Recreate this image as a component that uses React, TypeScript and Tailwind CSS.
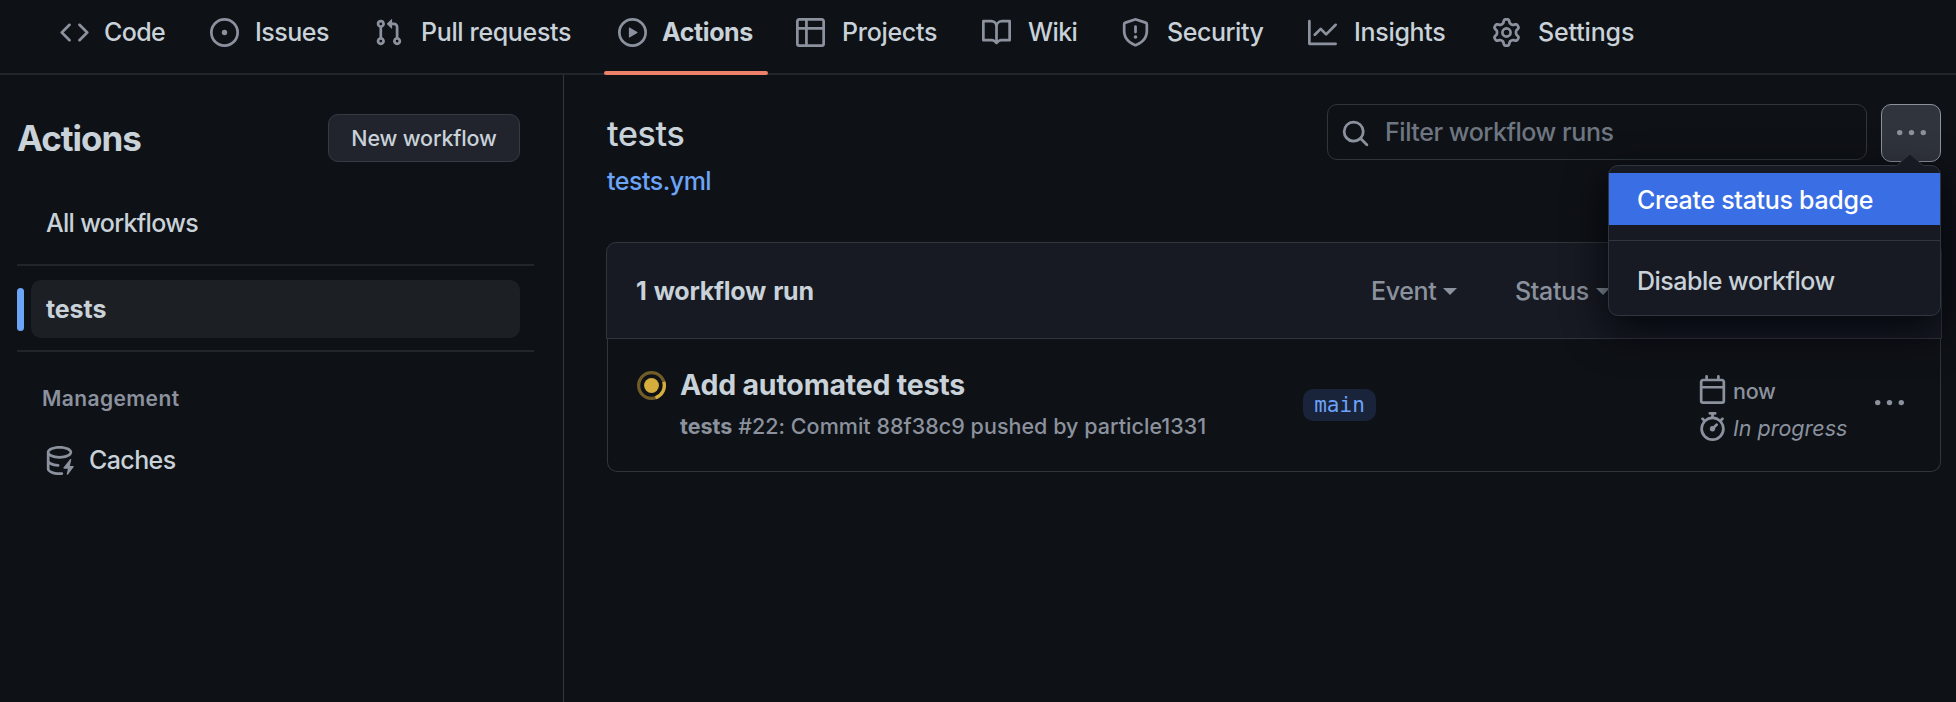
import React from "react";

const icons = {
  code: "m11.28 3.22 4.25 4.25a.75.75 0 0 1 0 1.06l-4.25 4.25a.749.749 0 0 1-1.275-.326.749.749 0 0 1 .215-.734L13.94 8l-3.72-3.72a.749.749 0 0 1 .326-1.275.749.749 0 0 1 .734.215Zm-6.56 0a.751.751 0 0 1 1.042.018.751.751 0 0 1 .018 1.042L2.06 8l3.72 3.72a.749.749 0 0 1-.326 1.275.749.749 0 0 1-.734-.215L.47 8.53a.75.75 0 0 1 0-1.06Z",
  issue: "M8 9.5a1.5 1.5 0 1 0 0-3 1.5 1.5 0 0 0 0 3ZM8 0a8 8 0 1 1 0 16A8 8 0 0 1 8 0ZM1.5 8a6.5 6.5 0 1 0 13 0 6.5 6.5 0 0 0-13 0Z",
  pull: "M1.5 3.25a2.25 2.25 0 1 1 3 2.122v5.256a2.251 2.251 0 1 1-1.5 0V5.372A2.25 2.25 0 0 1 1.5 3.25Zm5.677-.177L9.573.677A.25.25 0 0 1 10 .854V2.5h1A2.5 2.5 0 0 1 13.5 5v5.628a2.251 2.251 0 1 1-1.5 0V5a1 1 0 0 0-1-1h-1v1.646a.25.25 0 0 1-.427.177L7.177 3.427a.25.25 0 0 1 0-.354ZM3.75 2.5a.75.75 0 1 0 0 1.5.75.75 0 0 0 0-1.5Zm0 9.5a.75.75 0 1 0 0 1.5.75.75 0 0 0 0-1.5Zm8.25.75a.75.75 0 1 0 1.5 0 .75.75 0 0 0-1.5 0Z",
  play: "M8 0a8 8 0 1 1 0 16A8 8 0 0 1 8 0ZM1.5 8a6.5 6.5 0 1 0 13 0 6.5 6.5 0 0 0-13 0Zm4.879-2.773 4.264 2.559a.25.25 0 0 1 0 .428l-4.264 2.559A.25.25 0 0 1 6 10.559V5.442a.25.25 0 0 1 .379-.215Z",
  table: "M0 1.75C0 .784.784 0 1.75 0h12.5C15.216 0 16 .784 16 1.75v12.5A1.75 1.75 0 0 1 14.25 16H1.75A1.75 1.75 0 0 1 0 14.25ZM6.5 6.5v8h7.75a.25.25 0 0 0 .25-.25V6.5Zm8-1.5V1.75a.25.25 0 0 0-.25-.25H6.5V5Zm-13 1.5v7.75c0 .138.112.25.25.25H5v-8ZM5 5V1.5H1.75a.25.25 0 0 0-.25.25V5Z",
  book: "M0 1.75A.75.75 0 0 1 .75 1h4.253c1.227 0 2.317.59 3 1.501A3.743 3.743 0 0 1 11.006 1h4.245a.75.75 0 0 1 .75.75v10.5a.75.75 0 0 1-.75.75h-4.507a2.25 2.25 0 0 0-1.591.659l-.622.621a.75.75 0 0 1-1.06 0l-.622-.621A2.25 2.25 0 0 0 5.258 13H.75a.75.75 0 0 1-.75-.75Zm7.251 10.324.004-5.073-.002-2.253A2.25 2.25 0 0 0 5.003 2.5H1.5v9h3.757a3.75 3.75 0 0 1 1.994.574ZM8.755 4.75l-.004 7.322a3.752 3.752 0 0 1 1.992-.572H14.5v-9h-3.495a2.25 2.25 0 0 0-2.25 2.25Z",
  shield: "M7.467.133a1.748 1.748 0 0 1 1.066 0l5.25 1.68A1.75 1.75 0 0 1 15 3.48V7c0 1.566-.32 3.182-1.303 4.682-.983 1.498-2.585 2.813-5.032 3.855a1.697 1.697 0 0 1-1.33 0c-2.447-1.042-4.049-2.357-5.032-3.855C1.32 10.182 1 8.566 1 7V3.48a1.75 1.75 0 0 1 1.217-1.667Zm.61 1.429a.25.25 0 0 0-.153 0l-5.25 1.68a.25.25 0 0 0-.174.238V7c0 1.358.275 2.666 1.057 3.86.784 1.194 2.121 2.34 4.366 3.297a.196.196 0 0 0 .154 0c2.245-.956 3.582-2.104 4.366-3.298C13.225 9.666 13.5 8.36 13.5 7V3.48a.251.251 0 0 0-.174-.237l-5.25-1.68ZM8.75 4.75v3a.75.75 0 0 1-1.5 0v-3a.75.75 0 0 1 1.5 0ZM9 10.5a1 1 0 1 1-2 0 1 1 0 0 1 2 0Z",
  graph: "M1.5 1.75V13.5h13.75a.75.75 0 0 1 0 1.5H.75a.75.75 0 0 1-.75-.75V1.75a.75.75 0 0 1 1.5 0Zm14.28 2.53-5.25 5.25a.75.75 0 0 1-1.06 0L7 7.06 4.28 9.78a.751.751 0 0 1-1.042-.018.751.751 0 0 1-.018-1.042l3.25-3.25a.75.75 0 0 1 1.06 0L10 7.94l4.72-4.72a.751.751 0 0 1 1.042.018.751.751 0 0 1 .018 1.042Z",
  gear: "M8 0a8.2 8.2 0 0 1 .701.031C9.444.095 9.99.645 10.16 1.29l.288 1.107c.018.066.079.158.212.224.231.114.454.243.668.386.123.082.233.09.299.071l1.103-.303c.644-.176 1.392.021 1.82.63.27.385.506.792.704 1.218.315.675.111 1.422-.364 1.891l-.814.806c-.049.048-.098.147-.088.294.016.257.016.515 0 .772-.01.147.038.246.088.294l.814.806c.475.469.679 1.216.364 1.891a7.977 7.977 0 0 1-.704 1.217c-.428.61-1.176.807-1.82.63l-1.102-.302c-.067-.019-.177-.011-.3.071a5.909 5.909 0 0 1-.668.386c-.133.066-.194.158-.211.224l-.29 1.106c-.168.646-.715 1.196-1.458 1.26a8.006 8.006 0 0 1-1.402 0c-.743-.064-1.289-.614-1.458-1.26l-.289-1.106c-.018-.066-.079-.158-.212-.224a5.738 5.738 0 0 1-.668-.386c-.123-.082-.233-.09-.299-.071l-1.103.303c-.644.176-1.392-.021-1.82-.63a8.12 8.12 0 0 1-.704-1.218c-.315-.675-.111-1.422.363-1.891l.815-.806c.05-.048.098-.147.088-.294a6.214 6.214 0 0 1 0-.772c.01-.147-.038-.246-.088-.294l-.815-.806C.635 6.045.431 5.298.746 4.623a7.92 7.92 0 0 1 .704-1.217c.428-.61 1.176-.807 1.82-.63l1.102.302c.067.019.177.011.3-.071.214-.143.437-.272.668-.386.133-.066.194-.158.211-.224l.29-1.106C6.009.645 6.556.095 7.299.03 7.53.01 7.764 0 8 0Zm-.571 1.525c-.036.003-.108.036-.137.146l-.289 1.105c-.147.561-.549.967-.998 1.189-.173.086-.34.183-.5.29-.417.278-.97.423-1.529.27l-1.103-.303c-.109-.03-.175.016-.195.045-.22.312-.412.644-.573.99-.014.031-.021.11.059.19l.815.806c.411.406.562.957.53 1.456a4.709 4.709 0 0 0 0 .582c.032.499-.119 1.05-.53 1.456l-.815.806c-.081.08-.073.159-.059.19.162.346.353.677.573.989.02.03.085.076.195.046l1.102-.303c.56-.153 1.113-.008 1.53.27.161.107.328.204.501.29.447.222.85.629.997 1.189l.289 1.105c.029.109.101.143.137.146a6.6 6.6 0 0 0 1.142 0c.036-.003.108-.036.137-.146l.289-1.105c.147-.561.549-.967.998-1.189.173-.086.34-.183.5-.29.417-.278.97-.423 1.529-.27l1.103.303c.109.029.175-.016.195-.045.22-.313.411-.644.573-.99.014-.031.021-.11-.059-.19l-.815-.806c-.411-.406-.562-.957-.53-1.456a4.709 4.709 0 0 0 0-.582c-.032-.499.119-1.05.53-1.456l.815-.806c.081-.08.073-.159.059-.19a6.464 6.464 0 0 0-.573-.989c-.02-.03-.085-.076-.195-.046l-1.102.303c-.56.153-1.113.008-1.53-.27a4.44 4.44 0 0 0-.501-.29c-.447-.222-.85-.629-.997-1.189l-.289-1.105c-.029-.11-.101-.143-.137-.146a6.6 6.6 0 0 0-1.142 0ZM11 8a3 3 0 1 1-6 0 3 3 0 0 1 6 0ZM9.5 8a1.5 1.5 0 1 0-3.001.001A1.5 1.5 0 0 0 9.5 8Z",
  search: "M10.68 11.74a6 6 0 0 1-7.922-8.982 6 6 0 0 1 8.982 7.922l3.04 3.04a.749.749 0 0 1-.326 1.275.749.749 0 0 1-.734-.215ZM11.5 7a4.499 4.499 0 1 0-8.997 0A4.499 4.499 0 0 0 11.5 7Z",
  kebab: "M8 9a1.5 1.5 0 1 0 0-3 1.5 1.5 0 0 0 0 3ZM1.5 9a1.5 1.5 0 1 0 0-3 1.5 1.5 0 0 0 0 3Zm13 0a1.5 1.5 0 1 0 0-3 1.5 1.5 0 0 0 0 3Z",
  calendar: "M4.75 0a.75.75 0 0 1 .75.75V2h5V.75a.75.75 0 0 1 1.5 0V2h1.25c.966 0 1.75.784 1.75 1.75v10.5A1.75 1.75 0 0 1 13.25 16H2.75A1.75 1.75 0 0 1 1 14.25V3.75C1 2.784 1.784 2 2.75 2H4V.75A.75.75 0 0 1 4.75 0ZM2.5 7.5v6.75c0 .138.112.25.25.25h10.5a.25.25 0 0 0 .25-.25V7.5Zm10.75-4H2.75a.25.25 0 0 0-.25.25V6h11V3.75a.25.25 0 0 0-.25-.25Z",
  stopwatch: "M5.75.75A.75.75 0 0 1 6.5 0h3a.75.75 0 0 1 0 1.5h-.75v1l-.001.041a6.724 6.724 0 0 1 3.464 1.435l.007-.006.75-.75a.749.749 0 0 1 1.275.326.749.749 0 0 1-.215.734l-.75.75-.006.007a6.75 6.75 0 1 1-10.548 0L2.72 5.03l-.75-.75a.751.751 0 0 1 .018-1.042.751.751 0 0 1 1.042-.018l.75.75.007.006A6.72 6.72 0 0 1 7.25 2.541V1.5H6.5a.75.75 0 0 1-.75-.75ZM8 14.5a5.25 5.25 0 1 0-.001-10.501A5.25 5.25 0 0 0 8 14.5Zm.389-6.7 1.33-1.33a.75.75 0 1 1 1.061 1.06L9.45 8.861A1.503 1.503 0 0 1 8 10.75a1.499 1.499 0 1 1 .389-2.95Z",
  cache: "M2.5 5.724V8c0 .248.238.7 1.169 1.159.874.43 2.144.745 3.62.822a.75.75 0 1 1-.078 1.498c-1.622-.085-3.102-.432-4.204-.975a5.565 5.565 0 0 1-.507-.28V12.5c0 .133.058.318.282.551.227.237.591.483 1.101.707 1.015.447 2.47.742 4.117.742.406 0 .802-.018 1.183-.052a.751.751 0 1 1 .134 1.494C8.89 15.98 8.45 16 8 16c-1.805 0-3.475-.32-4.721-.869-.623-.274-1.173-.619-1.579-1.041-.408-.425-.7-.964-.7-1.59v-9c0-.626.292-1.165.7-1.591.406-.42.956-.766 1.579-1.04C4.525.32 6.195 0 8 0c1.806 0 3.476.32 4.721.869.623.274 1.173.619 1.579 1.041.408.425.7.964.7 1.59 0 .626-.292 1.165-.7 1.591-.406.42-.956.766-1.578 1.04C11.476 6.68 9.806 7 8 7c-1.805 0-3.475-.32-4.721-.869a6.15 6.15 0 0 1-.779-.407Zm0-2.224c0 .133.058.318.282.551.227.237.591.483 1.101.707C4.898 5.205 6.353 5.5 8 5.5c1.646 0 3.101-.295 4.118-.742.508-.224.873-.471 1.1-.708.224-.232.282-.417.282-.55 0-.133-.058-.318-.282-.551-.227-.237-.591-.483-1.101-.707C11.102 1.795 9.647 1.5 8 1.5c-1.646 0-3.101.295-4.118.742-.508.224-.873.471-1.1.708-.224.232-.282.417-.282.55ZM14.49 7.582a.375.375 0 0 0-.66-.313l-3.625 4.625a.375.375 0 0 0 .295.606h2.127l-.619 2.922a.375.375 0 0 0 .666.304l3.125-4.125A.375.375 0 0 0 15.5 11h-1.778l.769-3.418Z",
};

type IconName = keyof typeof icons;

function Icon({ name, className = "" }: { name: IconName; className?: string }) {
  return (
    <svg viewBox="0 0 16 16" fill="currentColor" fillRule="evenodd" className={`h-[29px] w-[29px] shrink-0 text-[#8b929e] ${className}`}>
      <path d={icons[name]} />
    </svg>
  );
}

const tabs: { icon: IconName; label: string; item: string; text: string; active?: boolean }[] = [
  { icon: "code", label: "Code", item: "w-[150px]", text: "ml-[15px] tracking-[-0.6px]" },
  { icon: "issue", label: "Issues", item: "w-[164px]", text: "ml-[16px] tracking-[-0.5px]" },
  { icon: "pull", label: "Pull requests", item: "w-[244px]", text: "ml-[18px] tracking-[-0.35px]" },
  { icon: "play", label: "Actions", item: "w-[178px]", text: "ml-[15px] font-[650] tracking-[-0.4px]", active: true },
  { icon: "table", label: "Projects", item: "w-[186px]", text: "ml-[17px] tracking-[-0.3px]" },
  { icon: "book", label: "Wiki", item: "w-[139px]", text: "ml-[17px] tracking-[-0.6px]" },
  { icon: "shield", label: "Security", item: "w-[187px]", text: "ml-[17px] tracking-[-0.45px]" },
  { icon: "graph", label: "Insights", item: "w-[184px]", text: "ml-[17px] tracking-[-0.3px]" },
  { icon: "gear", label: "Settings", item: "w-[160px]", text: "ml-[17px] tracking-[-0.15px]" },
];

function Nav() {
  return (
    <nav className="flex h-[75px] shrink-0 border-b-2 border-[#21262d] pl-[60px]">
      {tabs.map((t) => (
        <div key={t.label} className={`relative flex h-[64px] shrink-0 items-center ${t.item}`}>
          <Icon name={t.icon} />
          <span className={`whitespace-nowrap ${t.text}`}>{t.label}</span>
          {t.active && <span className="absolute -left-[14px] top-[71px] h-1 w-[164px] rounded-[2px] bg-[#ec8069]" />}
        </div>
      ))}
    </nav>
  );
}

function Sidebar() {
  return (
    <aside className="flex w-[564px] shrink-0 flex-col border-r border-[#30363d] pl-[17px]">
      <div className="mt-[39px] flex h-12 items-center justify-between pr-[43px]">
        <h1 className="text-[35px] font-[650] tracking-[-1.05px]">Actions</h1>
        <button className="h-12 w-[192px] rounded-[10px] border border-[#363b42] bg-[#21242c] text-[21.5px] font-[550] tracking-[-0.15px]">New workflow</button>
      </div>
      <div className="mt-[32px] flex h-[58px] items-center pl-[29px] tracking-[-0.7px]">All workflows</div>
      <div className="mr-[29px] mt-[12px] h-[2px] bg-[#21262d]" />
      <div className="mt-[14px] flex h-[58px] items-center">
        <span className="h-[43px] w-[7px] rounded-full bg-[#6ca4f8]" />
        <div className="ml-[7px] flex h-[58px] w-[489px] items-center rounded-[10px] bg-[#1c1f24] pl-[15px] font-[650] tracking-[-0.1px]">tests</div>
      </div>
      <div className="mr-[29px] mt-[12px] h-[2px] bg-[#21262d]" />
      <h3 className="mt-[32px] pl-[25px] text-[21px] font-semibold leading-[30px] tracking-[0.4px] text-[#8b929e]">Management</h3>
      <div className="mt-[31px] flex h-[30px] items-center gap-[14px] pl-[28px]">
        <Icon name="cache" />
        <span className="pl-px tracking-[-0.6px]">Caches</span>
      </div>
    </aside>
  );
}

function Menu() {
  return (
    <div className="absolute right-0 top-[61px] z-10 h-[151px] w-[333px] rounded-[10px] border border-[#30363d] bg-[#171a22] pt-[7px] shadow-[0_14px_42px_rgba(1,4,9,0.85)]">
      <svg viewBox="0 0 28 14" className="absolute -top-[13px] right-[16px] h-[14px] w-7">
        <path d="M0 13 14 1 28 13V14H0Z" fill="#171a22" />
        <path d="M1 12.5 14 .8 27 12.5" fill="none" stroke="#30363d" />
      </svg>
      <div className="flex h-[52px] items-center bg-[#396ee5] pl-[28px] pt-[2px] tracking-[-0.3px] text-white">Create status badge</div>
      <div className="mt-[15px] h-px bg-[#30363d]" />
      <div className="mt-[14px] flex h-[52px] items-center pl-[28px] tracking-[-0.5px]">Disable workflow</div>
    </div>
  );
}

function Filter({ label, className }: { label: string; className: string }) {
  return (
    <div className={`flex shrink-0 items-center gap-[7px] text-[#8b929e] ${className}`}>
      <span className="tracking-[-0.35px]">{label}</span>
      <span className="mt-[2px] border-x-[7px] border-t-[7px] border-x-transparent border-t-[#8b929e]" />
    </div>
  );
}

function Main() {
  return (
    <main className="flex w-[1392px] flex-col pl-[42px] pr-[15px]">
      <div className="relative mt-[29px] flex h-[138px] items-start">
        <div className="flex w-[721px] shrink-0 flex-col pl-px">
          <h2 className="text-[34px] leading-[60px] tracking-[-0.35px]">tests</h2>
          <a className="mt-[2px] leading-[30px] tracking-[-0.5px] text-[#6ca4f8]">tests.yml</a>
        </div>
        <div className="flex h-14 w-[540px] shrink-0 items-center rounded-[10px] border border-[#30363d] pl-[13px]">
          <Icon name="search" className="mt-[3px]" />
          <span className="ml-[15px] tracking-[-0.45px] text-[#6e7681]">Filter workflow runs</span>
        </div>
        <button className="ml-[14px] flex h-[58px] w-[60px] shrink-0 items-center justify-center rounded-[10px] border border-[#8b929e] bg-[#30343c]">
          <Icon name="kebab" />
        </button>
        <Menu />
      </div>
      <div className="flex h-[97px] w-[1336px] items-center rounded-t-[10px] border border-[#30363d] bg-[#171a22] pl-[29px]">
        <span className="w-[735px] font-[650] tracking-[-0.25px] [word-spacing:1.5px]">1 workflow run</span>
        <Filter label="Event" className="w-[144px]" />
        <Filter label="Status" className="w-[144px]" />
      </div>
      <div className="ml-px flex h-[133px] w-[1334px] items-start rounded-b-[10px] border border-t-0 border-[#30363d] pl-[29px]">
        <svg viewBox="0 0 16 16" className="mt-[32px] h-[29px] w-[29px] shrink-0">
          <circle cx="8" cy="8" r="7.1" fill="none" stroke="#d4a83a" strokeOpacity=".5" strokeWidth="1.8" />
          <path d="M14.8 6A7.1 7.1 0 0 1 10.2 14.75" fill="none" stroke="#d4ad3c" strokeWidth="1.8" />
          <circle cx="8" cy="8" r="4.1" fill="#d4ad3c" />
        </svg>
        <div className="ml-[14px] mt-[28px] w-[623px] shrink-0 whitespace-nowrap">
          <div className="text-[28.5px] font-[650] leading-[36px] tracking-[-0.2px]">Add automated tests</div>
          <div className="mt-[7px] text-[21.5px] leading-[32px] tracking-[0.03px] text-[#8b929e]">
            <b className="font-[650]">tests</b> #22: Commit 88f38c9 pushed by particle1331
          </div>
        </div>
        <div className="mt-[50px] flex h-8 w-[73px] shrink-0 items-center justify-center rounded-[10px] bg-[#192339] font-['DejaVu_Sans_Mono',monospace] text-[21px] text-[#6ca4f8]">main</div>
        <div className="ml-[322px] mt-[36px] flex w-[177px] shrink-0 flex-col gap-[8px] text-[21.5px] text-[#8b929e]">
          <div className="flex h-[29px] items-center gap-[6px]"><Icon name="calendar" /><span className="pt-[2px] tracking-[-0.3px]">now</span></div>
          <div className="flex h-[29px] items-center gap-[6px]"><Icon name="stopwatch" /><span className="whitespace-nowrap pt-[2px] italic">In progress</span></div>
        </div>
        <Icon name="kebab" className="mt-[50px]" />
      </div>
    </main>
  );
}

export default function App() {
  return (
    <div className="flex h-[702px] w-[1956px] flex-col overflow-hidden bg-[#0e1116] font-[Inter,sans-serif] text-[25px] font-[450] leading-[30px] text-[#c9d1d9]">
      <Nav />
      <div className="flex min-h-0 flex-1">
        <Sidebar />
        <Main />
      </div>
    </div>
  );
}
